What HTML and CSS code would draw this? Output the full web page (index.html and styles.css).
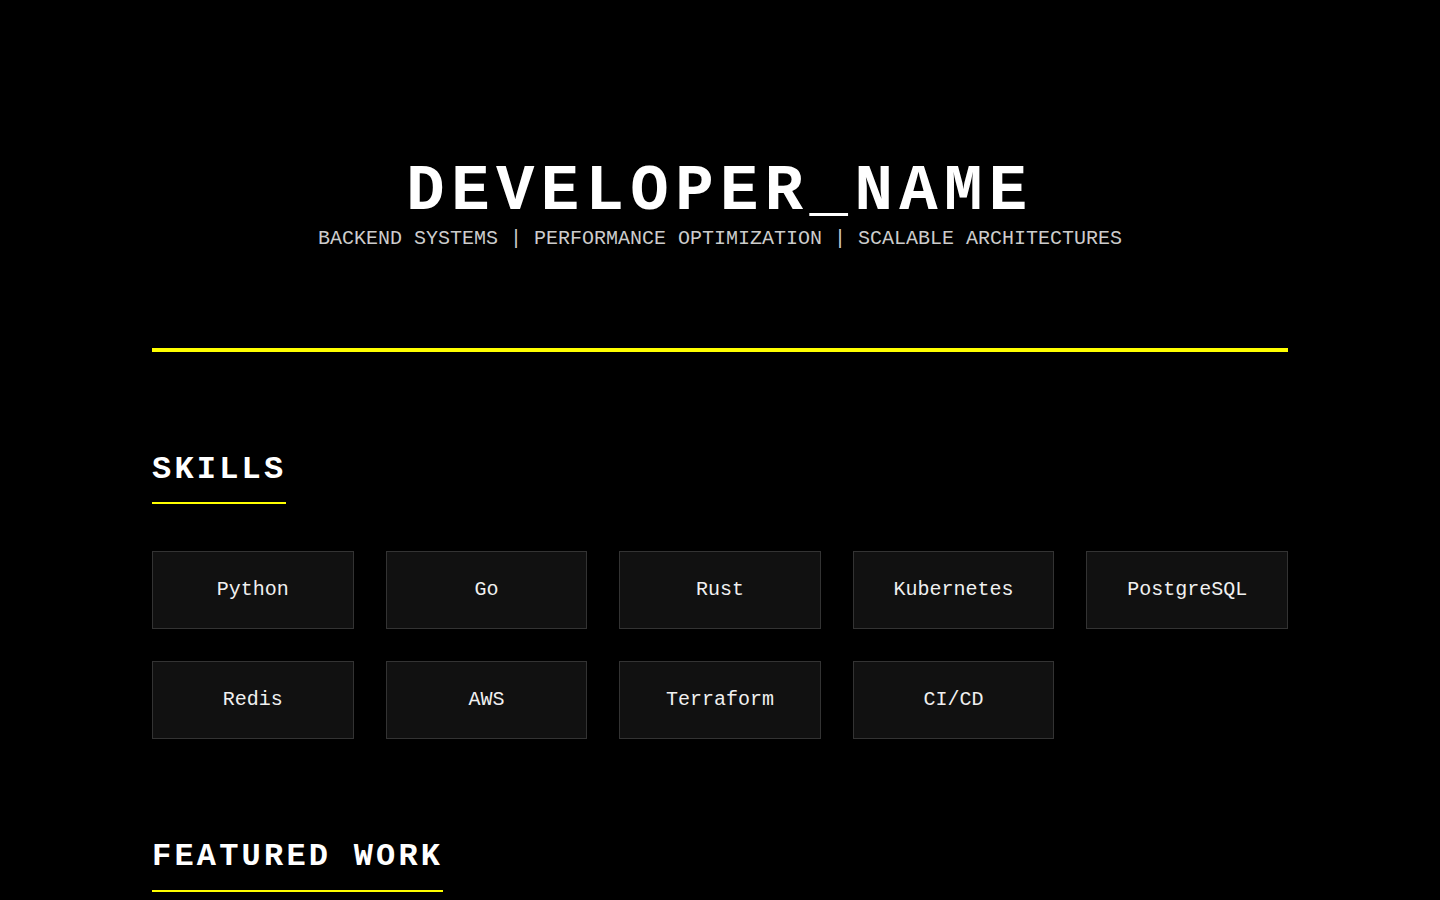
FILE: index.html
```html
<!DOCTYPE html>
<html lang="en">
<head>
<meta charset="utf-8">
<title>DEVELOPER_NAME</title>
<link rel="stylesheet" href="styles.css">
</head>
<body>
<div class="page">
  <header class="hero">
    <h1 class="hero-title">DEVELOPER_NAME</h1>
    <p class="hero-sub">BACKEND SYSTEMS | PERFORMANCE OPTIMIZATION | SCALABLE ARCHITECTURES</p>
  </header>
  <hr class="divider">
  <section class="section">
    <h2 class="section-title">SKILLS</h2>
    <div class="skills">
      <div class="skill">Python</div>
      <div class="skill">Go</div>
      <div class="skill">Rust</div>
      <div class="skill">Kubernetes</div>
      <div class="skill">PostgreSQL</div>
      <div class="skill">Redis</div>
      <div class="skill">AWS</div>
      <div class="skill">Terraform</div>
      <div class="skill">CI/CD</div>
    </div>
  </section>
  <section class="section">
    <h2 class="section-title">FEATURED WORK</h2>
  </section>
</div>
</body>
</html>
```
FILE: styles.css
```css
* { box-sizing: border-box; }
html, body { margin: 0; padding: 0; background: #000; }
body {
  color: #fff;
  font-family: "Liberation Mono", "Courier New", monospace;
}
.page {
  max-width: 1136px;
  margin: 0 auto;
}
.hero {
  padding: 160px 0 97px;
  text-align: center;
}
.hero-title {
  margin: 0;
  font-size: 64px;
  line-height: 1;
  font-weight: 700;
  letter-spacing: 0.1em;
  color: #fff;
}
.hero-sub {
  margin: 3px 0 0;
  font-size: 20px;
  line-height: 1.2;
  color: #cccccc;
}
.divider {
  border: 0;
  height: 4px;
  background: #ffff00;
  margin: 0;
}
.section {
  padding-top: 99px;
}
.section-title {
  display: inline-block;
  margin: 0;
  font-size: 32px;
  line-height: 1.2;
  font-weight: 700;
  letter-spacing: 0.1em;
  padding-bottom: 13px;
  border-bottom: 2px solid #ffff00;
}
.skills {
  display: grid;
  grid-template-columns: repeat(5, 1fr);
  gap: 32px;
  margin-top: 47px;
}
.skill {
  background: #111;
  border: 1px solid #333;
  padding: 24px 16px;
  text-align: center;
  font-size: 20px;
  line-height: 28px;
  color: #f0f0f0;
}
```
